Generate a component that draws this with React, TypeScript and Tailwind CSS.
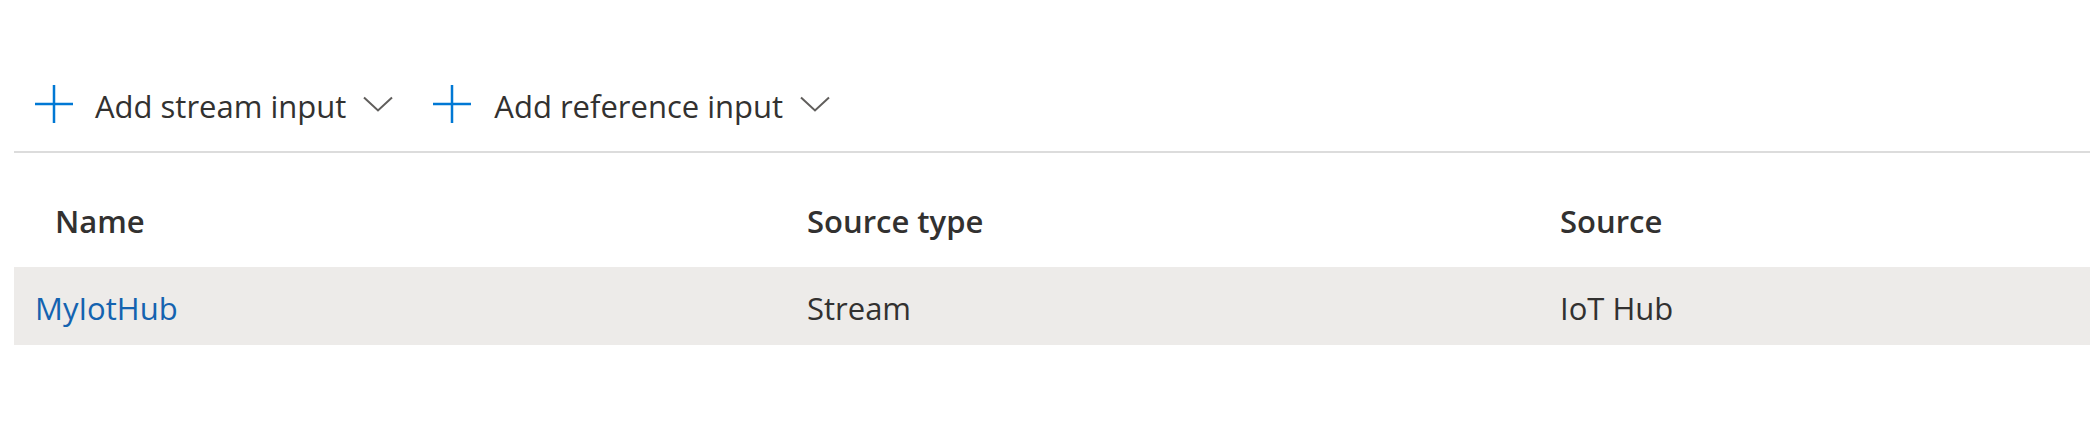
import React from "react";

function Plus() {
  return (
    <svg width="38" height="38" viewBox="0 0 38 38" className="shrink-0">
      <path d="M19 0 V38 M0 19 H38" stroke="#0078d4" strokeWidth="2.5" fill="none" />
    </svg>
  );
}

function Chevron() {
  return (
    <svg width="30" height="16" viewBox="0 0 30 16" className="shrink-0">
      <path d="M1 1.5 L15 14.5 L29 1.5" stroke="#605e5c" strokeWidth="2" fill="none" />
    </svg>
  );
}

export default function App() {
  const font = { fontFamily: '"Open Sans", "Noto Sans", sans-serif' };
  return (
    <div className="w-full h-[429px] bg-white text-[#323130]" style={font}>
      <div className="ml-[14px] mr-[1px] pt-[85px]">
        <div className="flex items-center h-[38px] pl-[21px] text-[31px] leading-none">
          <Plus />
          <span className="ml-[22px] pt-[5px]">Add stream input</span>
          <span className="ml-[17px] flex"><Chevron /></span>
          <span className="ml-[40px] flex"><Plus /></span>
          <span className="ml-[23px] pt-[5px]">Add reference input</span>
          <span className="ml-[17px] flex"><Chevron /></span>
        </div>
        <div className="mt-[28px] h-[2px] bg-[#dcdcdc]" />
        <div className="grid grid-cols-[772px_753px_1fr] h-[114px] items-center text-[31px] font-semibold pt-[22px]">
          <div className="pl-[41px]">Name</div>
          <div className="pl-[21px]">Source type</div>
          <div className="pl-[21px]">Source</div>
        </div>
        <div className="grid grid-cols-[772px_753px_1fr] h-[78px] items-center text-[31px] bg-[#edebe9] pt-[4px]">
          <div className="pl-[21px] text-[#1463b0]">MyIotHub</div>
          <div className="pl-[21px]">Stream</div>
          <div className="pl-[21px]">IoT Hub</div>
        </div>
      </div>
    </div>
  );
}
